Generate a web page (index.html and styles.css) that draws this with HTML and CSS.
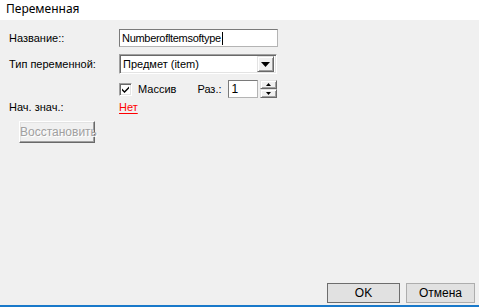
FILE: index.html
```html
<!DOCTYPE html>
<html lang="ru">
<head>
<meta charset="utf-8">
<title>Переменная</title>
<link rel="stylesheet" href="styles.css">
</head>
<body>
<div class="window">
  <div class="titlebar">Переменная</div>
  <div class="content">
    <div class="row row-name">
      <span class="label">Название::</span>
      <div class="textbox">Numberofltemsoftype<span class="caret"></span></div>
    </div>
    <div class="row row-type">
      <span class="label">Тип переменной:</span>
      <div class="combo">
        <span class="combo-text">Предмет (item)</span>
        <span class="combo-btn"><svg width="9" height="5" viewBox="0 0 9 5"><path d="M0 0H9L4.5 5Z" fill="#000"/></svg></span>
      </div>
    </div>
    <div class="row row-array">
      <span class="label"></span>
      <div class="array-controls">
        <span class="checkbox"><svg width="9" height="9" viewBox="0 0 9 9"><path d="M1 3.5L3.5 6L8 1.5V3.5L3.5 8L1 5.5Z" fill="#000"/></svg></span>
        <span class="check-label">Массив</span>
        <span class="dim-label">Раз.:</span>
        <div class="spin-input">1</div>
        <div class="spin-btns">
          <span class="spin-btn"><svg width="5" height="3" viewBox="0 0 5 3"><path d="M0 3H5L2.5 0Z" fill="#000"/></svg></span>
          <span class="spin-btn"><svg width="5" height="3" viewBox="0 0 5 3"><path d="M0 0H5L2.5 3Z" fill="#000"/></svg></span>
        </div>
      </div>
    </div>
    <div class="row row-init">
      <span class="label">Нач. знач.:</span>
      <span class="link-red">Нет</span>
    </div>
    <div class="row row-restore">
      <button class="classic-btn" disabled>Восстановить</button>
    </div>
    <div class="spacer"></div>
    <div class="footer">
      <button class="win-btn ok default">OK</button>
      <button class="win-btn cancel">Отмена</button>
    </div>
  </div>
  <div class="bottom-line"></div>
</div>
</body>
</html>
```

FILE: styles.css
```css
* { box-sizing: border-box; }
html, body {
  margin: 0;
  padding: 0;
}
body {
  width: 479px;
  height: 307px;
  overflow: hidden;
  font-family: "Liberation Sans", Arial, sans-serif;
  font-size: 11px;
  color: #000;
}
.window {
  width: 479px;
  height: 307px;
  display: flex;
  flex-direction: column;
  background: #f0f0f0;
}
.titlebar {
  height: 20px;
  background: #fff;
  font-family: "Noto Sans", "Open Sans", sans-serif;
  font-size: 12px;
  line-height: 18px;
  padding-left: 6px;
  color: #000;
}
.content {
  flex: 1;
  display: flex;
  flex-direction: column;
  padding: 9px 0 0 0;
}
.row {
  display: flex;
  align-items: center;
}
.label {
  width: 119px;
  padding-left: 9px;
  flex: none;
}
.row-name { height: 18px; }
.textbox {
  width: 159px;
  height: 18px;
  background: #fff;
  border: 1px solid #7a7a7a;
  border-right-color: #b4b4b4;
  border-bottom-color: #b4b4b4;
  padding-left: 2px;
  line-height: 15px;
  font-size: 11px;
  letter-spacing: -0.3px;
  display: flex;
  align-items: center;
}
.caret {
  display: inline-block;
  width: 1px;
  height: 13px;
  background: #000;
  margin-left: 1px;
}
.row-type { margin-top: 7px; height: 20px; }
.combo {
  width: 158px;
  height: 20px;
  background: #fff;
  border-top: 1px solid #a0a0a0;
  border-left: 1px solid #a0a0a0;
  border-right: 1px solid #fff;
  border-bottom: 1px solid #fff;
  box-shadow: inset 1px 1px 0 #696969, inset -1px -1px 0 #e3e3e3;
  display: flex;
  align-items: center;
  justify-content: space-between;
  padding: 2px 2px 2px 3px;
}
.combo-btn {
  width: 17px;
  height: 16px;
  background: #f0f0f0;
  border-top: 1px solid #e3e3e3;
  border-left: 1px solid #e3e3e3;
  border-right: 1px solid #696969;
  border-bottom: 1px solid #696969;
  box-shadow: inset 1px 1px 0 #fff, inset -1px -1px 0 #a0a0a0;
  display: flex;
  align-items: center;
  justify-content: center;
}
.row-array { margin-top: 6px; height: 18px; }
.array-controls {
  display: flex;
  align-items: center;
}
.checkbox {
  width: 13px;
  height: 13px;
  background: #fff;
  border-top: 1px solid #a0a0a0;
  border-left: 1px solid #a0a0a0;
  border-right: 1px solid #fff;
  border-bottom: 1px solid #fff;
  box-shadow: inset 1px 1px 0 #696969, inset -1px -1px 0 #e3e3e3;
  display: flex;
  align-items: center;
  justify-content: center;
}
.check-label { margin-left: 6px; }
.dim-label { margin-left: 21px; }
.spin-input {
  margin-left: 6px;
  width: 30px;
  height: 18px;
  background: #fff;
  border: 1px solid #7a7a7a;
  border-right-color: #b4b4b4;
  border-bottom-color: #b4b4b4;
  padding-left: 3px;
  line-height: 16px;
  font-size: 12px;
}
.spin-btns {
  margin-left: 2px;
  width: 17px;
  height: 18px;
  display: flex;
  flex-direction: column;
}
.spin-btn {
  height: 9px;
  background: #f0f0f0;
  border-top: 1px solid #e3e3e3;
  border-left: 1px solid #e3e3e3;
  border-right: 1px solid #696969;
  border-bottom: 1px solid #696969;
  box-shadow: inset 1px 1px 0 #fff, inset -1px -1px 0 #a0a0a0;
  display: flex;
  align-items: center;
  justify-content: center;
}
.row-init { margin-top: 2px; height: 14px; }
.link-red {
  color: #ff0000;
  text-decoration: underline;
  text-underline-offset: 2px;
}
.row-restore { margin-top: 7px; padding-left: 19px; }
.classic-btn {
  width: 76px;
  height: 22px;
  padding: 0;
  font-family: "Liberation Sans", Arial, sans-serif;
  font-size: 12px;
  color: #a0a0a0;
  text-shadow: 1px 1px 0 #fff;
  background: #f0f0f0;
  border-top: 1px solid #fff;
  border-left: 1px solid #fff;
  border-right: 1px solid #696969;
  border-bottom: 1px solid #696969;
  box-shadow: inset -1px -1px 0 #a0a0a0, inset 1px 1px 0 #e3e3e3;
}
.spacer { flex: 1; }
.footer {
  display: flex;
  justify-content: flex-end;
  gap: 6px;
  padding-right: 4px;
  padding-bottom: 2px;
}
.win-btn {
  height: 20px;
  padding: 0;
  font-family: "Liberation Sans", Arial, sans-serif;
  font-size: 12px;
  color: #000;
  background: #e1e1e1;
  border: 1px solid #adadad;
}
.win-btn.ok { width: 73px; }
.win-btn.cancel { width: 69px; }
.win-btn.default {
  border: 1px solid #6d6d6d;
}
.bottom-line {
  height: 2px;
  background: #1979ca;
}
```
